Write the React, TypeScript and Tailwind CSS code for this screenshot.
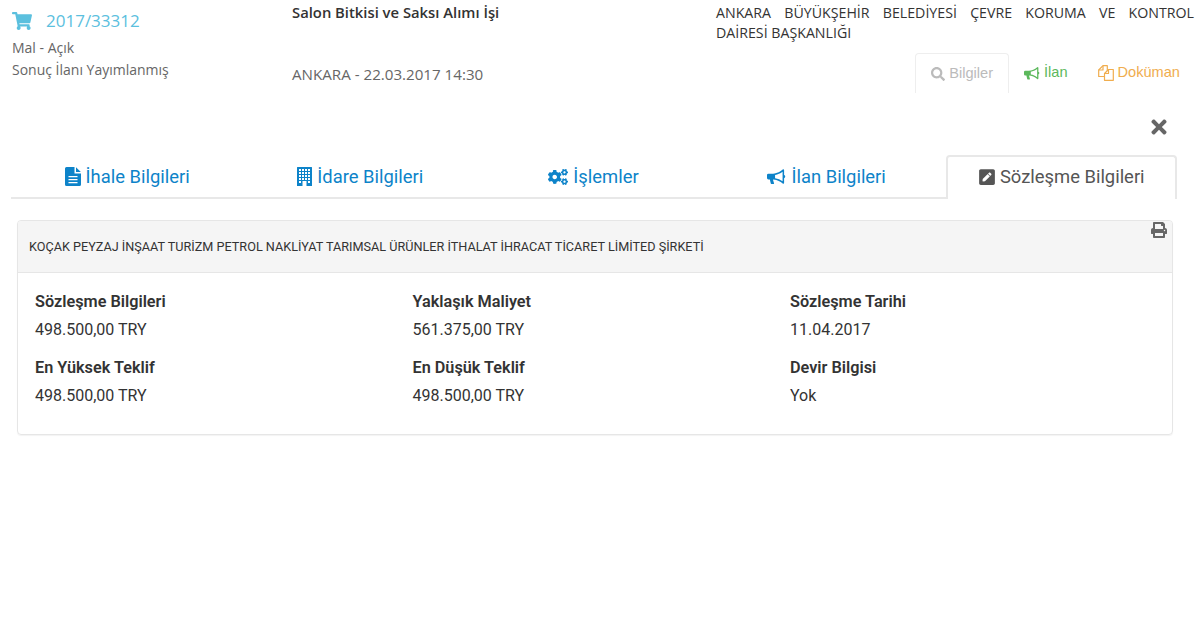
import { FaShoppingCart, FaCogs, FaPenSquare, FaSearch, FaTimes, FaPrint } from "react-icons/fa";

// Font Awesome 4 shapes that the packaged sets no longer carry
function FileIcon() {
  return (
    <svg width="16" height="19" viewBox="0 0 16 19" fill="currentColor">
      <path d="M1.5 0H9.5V6.5H16V17.5A1.5 1.5 0 0 1 14.5 19H1.5A1.5 1.5 0 0 1 0 17.5V1.5A1.5 1.5 0 0 1 1.5 0Z" />
      <path d="M11 0.3L15.8 5H11Z" />
      <path d="M3.5 9H12.5V10.3H3.5ZM3.5 12H12.5V13.3H3.5ZM3.5 15H12.5V16.3H3.5Z" fill="#fff" />
    </svg>
  );
}

function BuildingIcon() {
  return (
    <svg width="15" height="19" viewBox="0 0 15 19" fill="currentColor">
      <path d="M0.5 0H14.5A0.5 0.5 0 0 1 15 0.5V19H0V0.5A0.5 0.5 0 0 1 0.5 0Z" />
      <path
        d="M2 2H4V4H2ZM5 2H7V4H5ZM8 2H10V4H8ZM11 2H13V4H11ZM2 5H4V7H2ZM5 5H7V7H5ZM8 5H10V7H8ZM11 5H13V7H11ZM2 8H4V10H2ZM5 8H7V10H5ZM8 8H10V10H8ZM11 8H13V10H11ZM2 11H4V13H2ZM5 11H7V13H5ZM8 11H10V13H8ZM11 11H13V13H11ZM2 14H4V16H2ZM11 14H13V16H11ZM5.5 14H9.5V19H5.5Z"
        fill="#fff"
      />
    </svg>
  );
}

function BullhornIcon({ w, h }: { w: number; h: number }) {
  return (
    <svg width={w} height={h} viewBox="0 0 20 16" fill="currentColor">
      <path d="M1.5 4.5H7.5V10.5H6.2L7.4 14.6A0.6 0.6 0 0 1 6.8 15.4H4.6A0.6 0.6 0 0 1 4 14.9L3 10.5H1.5A1.5 1.5 0 0 1 0 9V6A1.5 1.5 0 0 1 1.5 4.5Z" />
      <path
        fillRule="evenodd"
        d="M7 4.5C11 4 14 2.5 16.5 0.2A1 1 0 0 1 18 1V5.8A1.8 1.8 0 0 1 18 9.2V14A1 1 0 0 1 16.5 14.8C14 12.5 11 11 7 10.5ZM8.5 5.8V9.2C11.5 9.6 14 10.8 16.4 12.6V2.4C14 4.2 11.5 5.4 8.5 5.8Z"
      />
    </svg>
  );
}

function CopyIcon() {
  return (
    <svg width="16" height="16" viewBox="0 0 16 16" fill="none" stroke="currentColor" strokeWidth="1.2" strokeLinejoin="round">
      <path d="M10.5 4.5H15.3V15.3H6.5V8.5Z" />
      <path d="M10.5 4.5V8.5H6.5" />
      <path d="M6 11.5H0.7V5L5 0.7H9.3V6" />
      <path d="M5 0.7V5H0.7" />
    </svg>
  );
}

const tabs = [
  { label: "İhale Bilgileri", icon: <FileIcon /> },
  { label: "İdare Bilgileri", icon: <BuildingIcon /> },
  { label: "İşlemler", icon: <FaCogs className="text-[20px]" /> },
  { label: "İlan Bilgileri", icon: <BullhornIcon w={19} h={16} /> },
];

const fields = [
  ["Sözleşme Bilgileri", "498.500,00 TRY"],
  ["Yaklaşık Maliyet", "561.375,00 TRY"],
  ["Sözleşme Tarihi", "11.04.2017"],
  ["En Yüksek Teklif", "498.500,00 TRY"],
  ["En Düşük Teklif", "498.500,00 TRY"],
  ["Devir Bilgisi", "Yok"],
];

export default function App() {
  return (
    <div className="h-[622px] w-[1199px] overflow-hidden bg-white font-['Roboto',sans-serif]">
      {/* top summary */}
      <div className="flex h-[93px] pl-3 font-['Open_Sans',sans-serif] text-[#666]">
        <div className="w-[280px] pt-[9px]">
          <div className="flex h-[24px] items-center text-[17px] text-[#5bc0de]">
            <FaShoppingCart className="mr-[14px] text-[20px]" />
            <span>2017/33312</span>
          </div>
          <div className="mt-[4px] text-[14px] leading-[22px]">Mal - Açık</div>
          <div className="text-[14px] leading-[22px]">Sonuç İlanı Yayımlanmış</div>
        </div>
        <div className="w-[424px] pt-[2px]">
          <div className="text-[14.8px] leading-[20px] font-semibold text-[#333]">Salon Bitkisi ve Saksı Alımı İşi</div>
          <div className="mt-[40px] text-[15.15px] leading-[24px]">ANKARA - 22.03.2017 14:30</div>
        </div>
        <div className="w-[478px] pt-[3px]">
          <div className="text-[14.2px] leading-[20px] text-[#333]">
            <div className="[text-align-last:justify]">ANKARA BÜYÜKŞEHİR BELEDİYESİ ÇEVRE KORUMA VE KONTROL</div>
            <div>DAİRESİ BAŞKANLIĞI</div>
          </div>
          <div className="mt-[10px] -mr-px flex justify-end font-['Liberation_Sans',sans-serif] text-[14.6px]">
            <div className="flex h-[40px] items-center gap-[4px] rounded-t border border-b-0 border-[#eee] px-[15px] text-[#bbb]">
              <FaSearch className="text-[14px]" />
              Bilgiler
            </div>
            <div className="flex h-[40px] items-center gap-[4px] px-[15px] text-[#5cb85c]">
              <BullhornIcon w={16} h={13} />
              İlan
            </div>
            <div className="flex h-[40px] items-center gap-[4px] px-[15px] text-[#f0ad4e]">
              <CopyIcon />
              Doküman
            </div>
          </div>
        </div>
      </div>

      {/* close */}
      <div className="flex h-[62px] justify-end pt-[23px] pr-[29px] text-[#666]">
        <FaTimes className="text-[22px]" />
      </div>

      {/* tabs */}
      <div className="mx-[11px] flex h-[44px] w-[1166px] border-b-2 border-[#e8e8e8] text-[18.4px]">
        {tabs.map((t) => (
          <div key={t.label} className="flex w-[233.2px] items-center justify-center gap-[5px] pt-[1px] pr-[1px] text-[#0d83c9]">
            {t.icon}
            {t.label}
          </div>
        ))}
        <div className="ml-[2px] flex h-[44px] w-[231px] items-center justify-center gap-[4px] rounded-t border-2 border-b-0 border-[#e8e8e8] bg-white pb-[2px] text-[#555]">
          <FaPenSquare className="text-[18px]" />
          Sözleşme Bilgileri
        </div>
      </div>

      {/* contract panel */}
      <div className="mt-[21px] ml-[17px] h-[215px] w-[1156px] overflow-hidden rounded border border-[#e6e6e6] shadow-[0_1px_1px_rgba(0,0,0,0.05)]">
        <div className="relative flex h-[52px] items-center border-b border-[#e6e6e6] bg-[#f5f5f5] pl-[11px] text-[12.67px] text-[#333]">
          KOÇAK PEYZAJ İNŞAAT TURİZM PETROL NAKLİYAT TARIMSAL ÜRÜNLER İTHALAT İHRACAT TİCARET LİMİTED ŞİRKETİ
          <FaPrint className="absolute top-[1px] right-[5px] text-[16px] text-[#666]" />
        </div>
        <div className="grid grid-cols-[377.5px_377.5px_1fr] pt-[18px] pl-[17px] text-[16px] text-[#333]">
          {fields.map(([label, value]) => (
            <div key={label} className="h-[66px]">
              <div className="text-[16.25px] leading-[22px] font-semibold">{label}</div>
              <div className="mt-[6px] leading-[22px]">{value}</div>
            </div>
          ))}
        </div>
      </div>
    </div>
  );
}
